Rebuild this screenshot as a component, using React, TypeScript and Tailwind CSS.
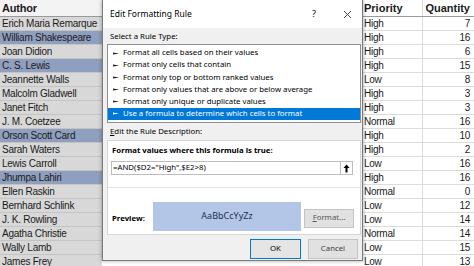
import React from "react"

type Row = { author: string; priority: string; qty: number; hit?: boolean }

const rows: Row[] = [
  { author: "Erich Maria Remarque", priority: "High", qty: 7 },
  { author: "William Shakespeare", priority: "High", qty: 16, hit: true },
  { author: "Joan Didion", priority: "High", qty: 6 },
  { author: "C. S. Lewis", priority: "High", qty: 15, hit: true },
  { author: "Jeannette Walls", priority: "Low", qty: 8 },
  { author: "Malcolm Gladwell", priority: "High", qty: 3 },
  { author: "Janet Fitch", priority: "High", qty: 3 },
  { author: "J. M. Coetzee", priority: "Normal", qty: 16 },
  { author: "Orson Scott Card", priority: "High", qty: 10, hit: true },
  { author: "Sarah Waters", priority: "High", qty: 2 },
  { author: "Lewis Carroll", priority: "Low", qty: 16 },
  { author: "Jhumpa Lahiri", priority: "High", qty: 16, hit: true },
  { author: "Ellen Raskin", priority: "Normal", qty: 0 },
  { author: "Bernhard Schlink", priority: "Low", qty: 12 },
  { author: "J. K. Rowling", priority: "Low", qty: 14 },
  { author: "Agatha Christie", priority: "Normal", qty: 14 },
  { author: "Wally Lamb", priority: "Low", qty: 15 },
  { author: "James Frey", priority: "Low", qty: 13 },
]

const ruleTypes = [
  "Format all cells based on their values",
  "Format only cells that contain",
  "Format only top or bottom ranked values",
  "Format only values that are above or below average",
  "Format only unique or duplicate values",
  "Use a formula to determine which cells to format",
]

function Pointer({ light }: { light?: boolean }) {
  return (
    <svg width="6" height="5" viewBox="0 0 6 5" className="shrink-0">
      <path d="M0 1.5 L6 2.5 L0 3.5 Z" fill={light ? "#fff" : "#222"} />
    </svg>
  )
}

function Sheet() {
  return (
    <div className="flex flex-col font-['Liberation_Sans',sans-serif] text-[10px] tracking-[-0.25px] text-[#1b1b1b]">
      {/* header */}
      <div className="flex h-[17px] border-b border-[#9a9a9a]">
        <div className="w-[102px] bg-[#f3f3f3] pl-[2px] flex items-center font-bold text-[11px] tracking-[-0.2px]">
          Author
        </div>
        <div className="flex-1" />
        <div className="w-[59px] pl-[1px] flex items-center font-bold text-[11px] tracking-normal">Priority</div>
        <div className="w-[52px] pr-[4px] flex items-center justify-end font-bold text-[11px] tracking-normal border-l border-[#dadada]">
          Quantity
        </div>
      </div>
      {rows.map((r) => (
        <div key={r.author} className="flex h-[14px]">
          <div
            className={
              "w-[102px] pl-[2px] flex items-center whitespace-nowrap overflow-hidden border-b border-[#c4c4c4] " +
              (r.hit ? "bg-[#8f9fbf]" : "bg-[#d8d8d8]")
            }
          >
            {r.author}
          </div>
          <div className="flex-1" />
          <div className="w-[59px] pl-[1px] flex items-center border-b border-[#dcdcdc]">{r.priority}</div>
          <div className="w-[52px] pr-[4px] flex items-center justify-end border-b border-l border-[#dcdcdc]">
            {r.qty}
          </div>
        </div>
      ))}
    </div>
  )
}

function Dialog() {
  return (
    <div className="absolute left-[102px] top-0 w-[261px] h-[261px] bg-[#f0f0f0] border-l border-r border-b border-[#7a7a7a] shadow-[0_0_4px_rgba(0,0,0,0.35)] flex flex-col font-['Noto_Sans',sans-serif] text-black">
      {/* title bar */}
      <div className="h-[28px] bg-white flex items-center pl-[7px] pr-[10px] shrink-0">
        <span className="text-[8.5px] flex-1">Edit Formatting Rule</span>
        <span className="text-[9px] mr-[27px]">?</span>
        <svg width="9" height="9" viewBox="0 0 9 9">
          <path d="M1 1 L8 8 M8 1 L1 8" stroke="#333" strokeWidth="0.9" />
        </svg>
      </div>
      <div className="flex flex-col pl-[4px] pr-[1px] text-[7.8px]">
        <div className="h-[15px] flex items-center pl-[3px] mt-[1px]">Select a Rule Type:</div>
        <div className="h-[79px] bg-white border border-[#8c8f96] py-[2px] flex flex-col">
          {ruleTypes.map((t, i) => {
            const sel = i === ruleTypes.length - 1
            return (
              <div
                key={t}
                className={
                  "h-[13px] flex items-center gap-[4px] pl-[5px] " + (sel ? "bg-[#0078d7] text-white" : "")
                }
              >
                <Pointer light={sel} />
                <span>{t}</span>
              </div>
            )
          })}
        </div>
        <div className="h-[17px] flex items-center pl-[3px]">
          <span>
            <span className="underline">E</span>dit the Rule Description:
          </span>
        </div>
        <div className="h-[95px] bg-white border border-[#d6d6d6] flex flex-col">
          <div className="h-[47px] border-b border-[#e3e3e3] flex flex-col px-[3px]">
            <div className="h-[20px] flex items-center pl-[1px] font-bold">Format values where this formula is true:</div>
            <div className="h-[14px] mr-[4px] border border-[#bdbdbd] flex items-center">
              <span className="flex-1 pl-[1px]">=AND($D2="High",$E2&gt;8)</span>
              <div className="w-[12px] h-full border-l border-[#bdbdbd] flex items-center justify-center">
                <svg width="7" height="9" viewBox="0 0 7 9">
                  <path d="M3.5 0.5 L6.5 4 H4.5 V8.5 H2.5 V4 H0.5 Z" fill="#000" />
                </svg>
              </div>
            </div>
          </div>
          <div className="flex-1 flex items-center pl-[4px] pr-[6px] pt-[12px] pb-[2px]">
            <span className="w-[41px] font-bold pt-[5px]">Preview:</span>
            <div className="w-[148px] h-[29px] bg-[#b4c6e7] flex items-center justify-center text-[9px] text-[#1f2f4f]">
              AaBbCcYyZz
            </div>
            <div className="flex-1" />
            <div className="w-[50px] h-[19px] mt-[4px] bg-[#e1e1e1] border border-[#c4c4c4] flex items-center justify-center text-[#555]">
              <span>
                <span className="underline">F</span>ormat...
              </span>
            </div>
          </div>
        </div>
        <div className="flex justify-end gap-[7px] mt-[4px] pr-[3px]">
          <div className="w-[51px] h-[20px] bg-[#e5e5e5] border border-[#0078d7] flex items-center justify-center">
            OK
          </div>
          <div className="w-[50px] h-[20px] bg-[#e1e1e1] border border-[#c4c4c4] flex items-center justify-center text-[#444]">
            Cancel
          </div>
        </div>
      </div>
    </div>
  )
}

export default function App() {
  return (
    <div className="relative w-[474px] h-[266px] overflow-hidden bg-white">
      <Sheet />
      <Dialog />
    </div>
  )
}
